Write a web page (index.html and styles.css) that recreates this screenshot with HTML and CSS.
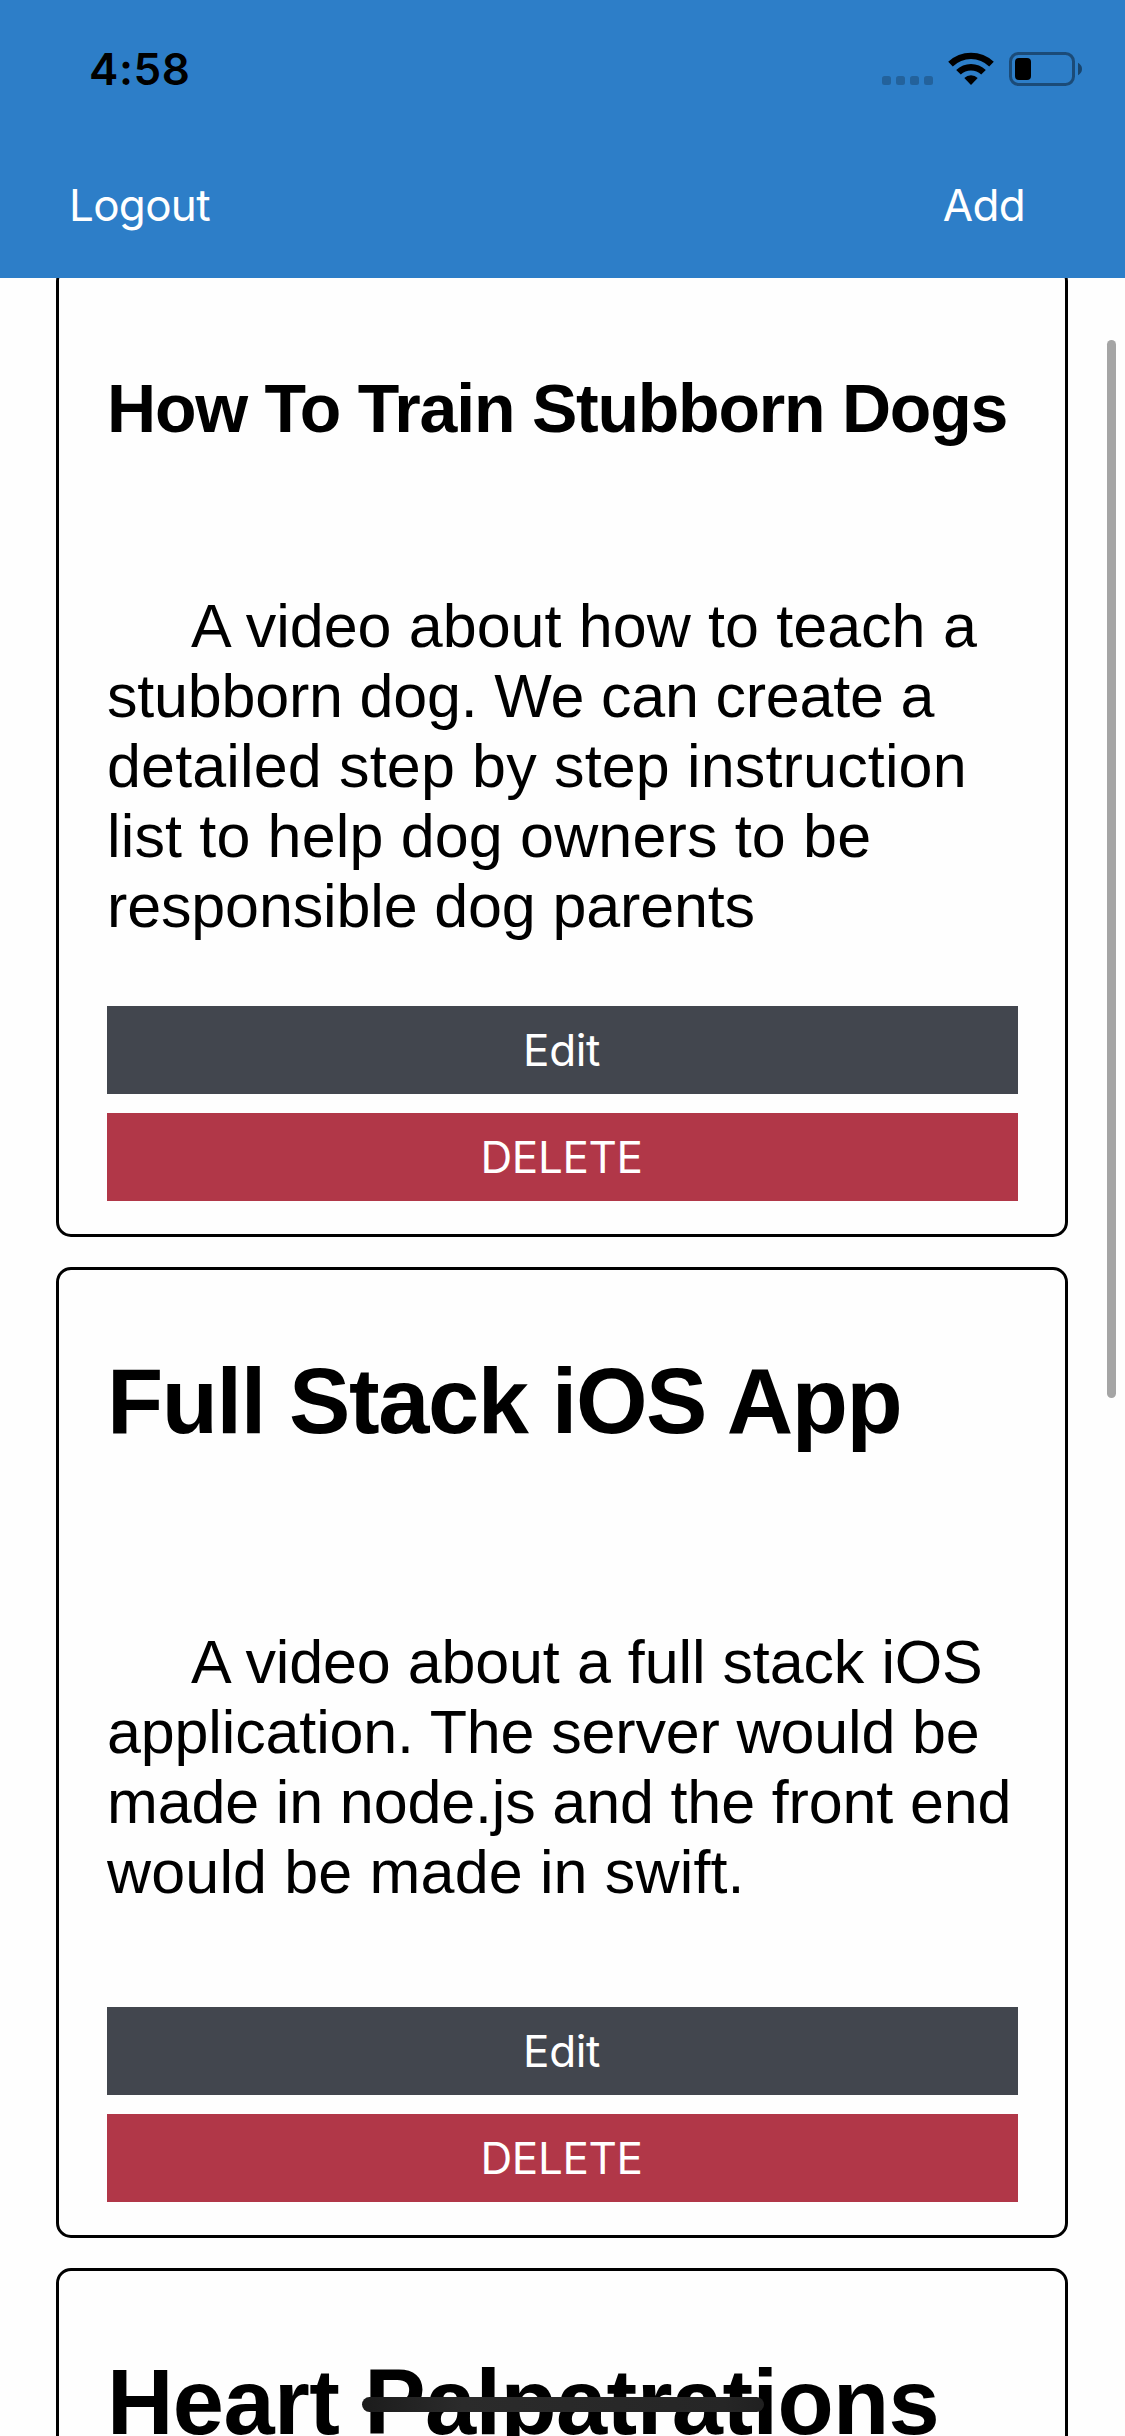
FILE: index.html
```
<!DOCTYPE html>
<html lang="en">
<head>
<meta charset="utf-8">
<title>Video Ideas</title>
<link rel="stylesheet" href="styles.css">
</head>
<body>
<div class="screen">
  <header class="header">
    <div class="status">
      <span class="time">4:58</span>
      <svg class="status-icons" width="202" height="36" viewBox="881 51 202 36" aria-hidden="true">
        <g fill="#000" fill-opacity=".22">
          <rect x="882" y="76" width="9" height="9" rx="2.5"/>
          <rect x="896" y="76" width="9" height="9" rx="2.5"/>
          <rect x="910" y="76" width="9" height="9" rx="2.5"/>
          <rect x="924" y="76" width="9" height="9" rx="2.5"/>
        </g>
        <path d="M948.2 61.8A33 33 0 0 1 993.8 61.8L989.2 66.4A26.3 26.3 0 0 0 952.8 66.4Z"/>
        <path d="M956.2 70A21.3 21.3 0 0 1 985.8 70L981.2 74.5A14.8 14.8 0 0 0 960.8 74.5Z"/>
        <path d="M964.3 78A9.8 9.8 0 0 1 977.7 78L971 85Z"/>
        <rect x="1010.5" y="53.5" width="63" height="31" rx="8" fill="none" stroke="#000" stroke-opacity=".4" stroke-width="3"/>
        <rect x="1015" y="58" width="16" height="22" rx="4"/>
        <path d="M1078 62.8Q1082 65 1082 69T1078 75.2Z" fill-opacity=".45"/>
      </svg>
    </div>
    <nav class="nav">
      <a class="nav-link">Logout</a>
      <a class="nav-link">Add</a>
    </nav>
  </header>

  <main class="list">
    <article class="card">
      <h2 class="title title-small">How To Train Stubborn Dogs</h2>
      <p class="text">
        <span class="line first">A video about how to teach a</span>
        <span class="line tight">stubborn dog. We can create a</span>
        <span class="line loose">detailed step by step instruction</span>
        <span class="line loose">list to help dog owners to be</span>
        <span class="line snug">responsible dog parents</span>
      </p>
      <div class="actions">
        <button class="button edit">Edit</button>
        <button class="button delete">DELETE</button>
      </div>
    </article>

    <article class="card">
      <h2 class="title">Full Stack iOS App</h2>
      <p class="text">
        <span class="line first snug">A video about a full stack iOS</span>
        <span class="line snug">application. The server would be</span>
        <span class="line snug">made in node.js and the front end</span>
        <span class="line loose">would be made in swift.</span>
      </p>
      <div class="actions">
        <button class="button edit">Edit</button>
        <button class="button delete">DELETE</button>
      </div>
    </article>

    <article class="card">
      <h2 class="title title-wide">Heart Palpatrations</h2>
    </article>
  </main>

  <div class="scrollbar"></div>
  <div class="home-indicator"></div>
</div>
</body>
</html>
```
FILE: styles.css
```
* {
  box-sizing: border-box;
}

body {
  margin: 0;
  background: #fefefe;
  color: #000;
}

.screen {
  position: relative;
  display: flex;
  flex-direction: column;
  width: 1125px;
  height: 2436px;
  overflow: hidden;
  font-family: "Liberation Sans", Arial, sans-serif;
}

.header {
  position: relative;
  z-index: 1;
  flex: none;
  height: 278px;
  padding-top: 25px;
  background: #2d7ec8;
  font-family: Inter, sans-serif;
}

.status {
  display: flex;
  justify-content: space-between;
  height: 136px;
  padding: 0 42px 0 89px;
}

.time {
  font-size: 44px;
  font-weight: 600;
  line-height: 88px;
  letter-spacing: 0.6px;
}

.status-icons {
  margin-top: 26px;
}

.nav {
  display: flex;
  justify-content: space-between;
  padding: 0 100px 0 69px;
}

.nav-link {
  color: #fff;
  font-size: 44px;
  line-height: 88px;
  letter-spacing: -0.7px;
}

/* The list is scrolled: the first card starts under the header. */
.list {
  display: flex;
  flex: none;
  flex-direction: column;
  gap: 30px;
  margin-top: -12px;
  padding: 0 57px 0 56px;
}

.card {
  display: flex;
  flex: none;
  flex-direction: column;
  height: 971px;
  padding: 0 47px 33px 48px;
  border: 3px solid #000;
  border-radius: 15px;
}

.title {
  margin: 77px 0 172px;
  font-size: 92px;
  font-weight: 700;
  line-height: 108px;
  letter-spacing: -1.4px;
  white-space: nowrap;
}

.title-wide {
  letter-spacing: -0.6px;
}

.title-small {
  margin: 99px 0 143px;
  font-size: 68px;
  line-height: 80px;
  letter-spacing: -1.22px;
}

.text {
  margin: 0;
  font-size: 61px;
  line-height: 70px;
}

.line {
  display: block;
  white-space: nowrap;
}

.first {
  padding-left: 84px;
  word-spacing: 0.4px;
}

.tight {
  letter-spacing: -0.2px;
}

.snug {
  letter-spacing: -0.14px;
}

.loose {
  letter-spacing: 0.16px;
}

.actions {
  display: flex;
  flex-direction: column;
  gap: 19px;
  margin-top: auto;
}

.button {
  height: 88px;
  padding: 0 2px 0 0;
  border: 0;
  color: #fff;
  font: 400 44px/88px Inter, sans-serif;
  letter-spacing: -0.4px;
}

.edit {
  background: #42464e;
}

.delete {
  background: #b13748;
}

.scrollbar {
  position: absolute;
  top: 340px;
  right: 9px;
  width: 9px;
  height: 1058px;
  border-radius: 5px;
  background: #a5a5a5;
}

.home-indicator {
  position: absolute;
  bottom: 24px;
  left: 362px;
  width: 402px;
  height: 15px;
  border-radius: 8px;
  background: linear-gradient(90deg, #1c1c1c, #2b2b2b 25%, #262626 90%, #202020);
}
```
